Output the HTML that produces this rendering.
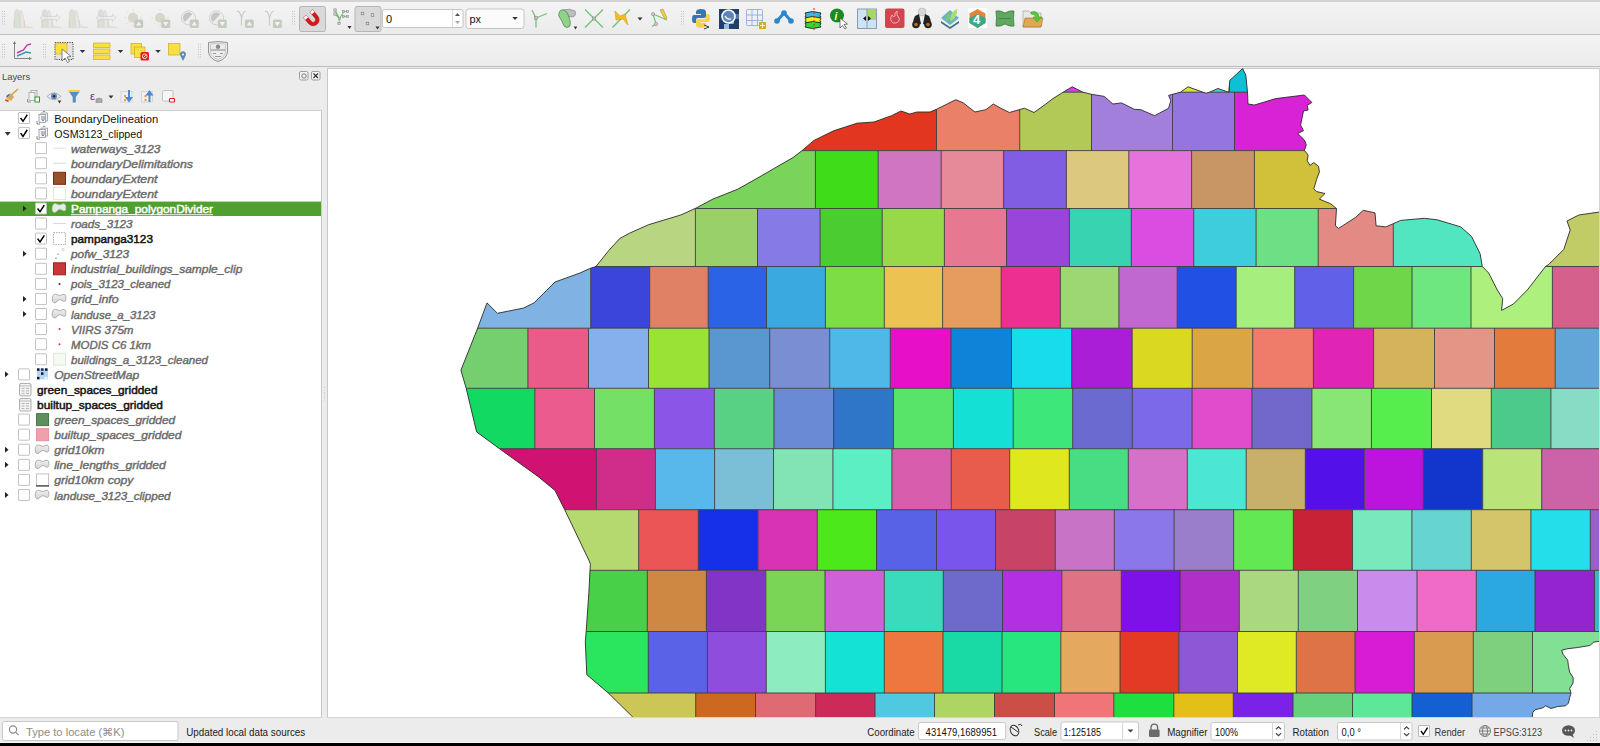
<!DOCTYPE html>
<html><head><meta charset="utf-8"><style>
*{box-sizing:border-box}
body{margin:0;width:1600px;height:746px;overflow:hidden;position:relative;background:#ececec;font-family:"Liberation Sans", sans-serif;}
.abs{position:absolute}
.tb{position:absolute;left:0;width:1600px;background:linear-gradient(#f4f4f4,#ebebeb);}
svg text{font-family:"Liberation Sans", sans-serif}
</style></head><body>
<div class="tb" style="top:0;height:35px;border-top:2px solid #d4d4d4;border-bottom:1px solid #c2c2c2"></div>
<div class="tb" style="top:35px;height:32px;border-bottom:1px solid #bdbdbd"></div>
<div class="abs" style="left:0;top:110px;width:322px;height:608px;background:#fff;border-top:1px solid #cfcfcf;border-right:1px solid #c8c8c8;border-bottom:1px solid #d4d4d4"></div>
<div class="abs" style="left:327px;top:68px;width:1273px;height:650px;background:#fff;border:1px solid #c8c8c8;border-right:1px solid #d4d4d4;border-bottom:1px solid #d4d4d4"></div>
<svg width="1271" height="649" viewBox="328 68 1271 649" style="position:absolute;left:328px;top:68px"><defs><clipPath id="cp"><polygon points="460.9,370.2 477.7,328 487,302.9 497.5,313.3 523.7,308 534,302.9 555,282 580,273 589.6,268.6 596,266.5 607.9,251.5 619.7,238.6 629.3,233.3 648.6,224.7 680.8,215 695.8,208.2 713,199 737.6,189.3 762.2,175.4 780,165 793,157.6 801.9,150.7 814,140.4 833.6,130.8 857,123.2 874,122 891.5,115.7 901,111 909.7,114 917,112 930,112 936.5,109.3 955.8,99.7 963.3,102.9 975,112 985.8,109.7 993.3,104 1000.8,108.2 1009.4,112.5 1024.4,108.2 1034,112.5 1045.9,104 1052.9,98.6 1062.5,92.6 1072.2,86.8 1082.9,92.2 1091.5,94.3 1104.3,96.4 1112.9,104 1121.5,102.9 1134.3,109.3 1140.8,109.7 1154.7,115.7 1168.6,108.2 1170.8,100.7 1168.6,95.4 1172.5,94.3 1180.4,92.2 1188,86.8 1203,92.2 1206.2,93.2 1209.4,92.2 1218,88.5 1228.7,92.2 1229.8,80.4 1242.6,68.6 1245.8,75 1247.5,92.2 1248,104 1254.4,105 1275.8,98.6 1304.4,95 1311.9,102.5 1307.2,105.3 1308.1,110 1303.5,111 1300.6,125 1303.5,130.7 1297.8,133.5 1304.4,140 1306.3,144.7 1304.4,150.4 1308.1,155 1307.2,160.7 1310,165.4 1313.8,162.5 1318.5,166.3 1319.4,172 1316.6,179.4 1313.8,188.8 1316.6,191.6 1325,193.5 1319.4,199.1 1330.7,203.8 1336.5,208.6 1335.4,225.8 1338.6,228.4 1355.8,217.2 1363.3,210.3 1375,212.9 1376.1,225.8 1385.8,226.9 1400.8,220.4 1424.4,218.3 1437.2,219.8 1460.8,226.9 1471.6,236.5 1480.1,253.7 1482.3,266.5 1488.7,273 1497.3,290 1502.7,298.6 1501.6,310.4 1513.4,304 1527.3,290 1545.5,266.5 1548.8,264.4 1563.8,249.4 1570.2,230 1567,221 1578.8,215 1610,210.5 1610,641.4 1599.2,641.4 1593.8,642.1 1589.8,645.5 1577.7,647.5 1567,648.8 1561.7,650.2 1563,654.2 1567.7,660.2 1568.4,665.6 1569.7,672.3 1573.1,677.6 1573.1,683 1569.7,688.4 1571,693.1 1569.7,697.7 1568.4,703.1 1565.7,705.8 1557.6,706.5 1551,708.5 1545.6,705.8 1542.9,707.8 1534.9,709.8 1532.8,712.5 1532.2,717.2 1532.2,725 640.5,725 632.9,717.2 608.2,692.9 586.8,674.7 585.3,641.5 586.2,631.4 588.9,592.2 590,570.3 590.4,564.4 589.3,561.1 564.7,509.7 555,490.4 537.9,476.4 499.3,448.6 476.6,431.9 466.2,388.3"/></clipPath></defs><g clip-path="url(#cp)"><rect x="400" y="55" width="690.0" height="37.2" fill="#dd3ddd"/><rect x="1090" y="55" width="80.0" height="37.2" fill="#ffffff"/><rect x="1170" y="55" width="36.0" height="37.2" fill="#d5e03a"/><rect x="1206" y="55" width="23.3" height="37.2" fill="#3cd8c6"/><rect x="1229.3" y="55" width="390.7" height="37.2" fill="#0cc0d6"/><rect x="400" y="92.2" width="536.5" height="58.4" fill="#e3361f"/><rect x="936.5" y="92.2" width="83.2" height="58.4" fill="#eb8068"/><rect x="1019.7" y="92.2" width="71.8" height="58.4" fill="#b3c957"/><rect x="1091.5" y="92.2" width="81.0" height="58.4" fill="#a37fdc"/><rect x="1172.5" y="92.2" width="62.0" height="58.4" fill="#9575e0"/><rect x="1234.5" y="92.2" width="385.5" height="58.4" fill="#d822d6"/><rect x="400" y="150.6" width="415.4" height="57.9" fill="#7ad35a"/><rect x="815.4" y="150.6" width="62.8" height="57.9" fill="#3fdd19"/><rect x="878.2" y="150.6" width="63.0" height="57.9" fill="#d075c0"/><rect x="941.2" y="150.6" width="62.4" height="57.9" fill="#e68a9a"/><rect x="1003.6" y="150.6" width="62.8" height="57.9" fill="#815de3"/><rect x="1066.4" y="150.6" width="62.4" height="57.9" fill="#dcc97d"/><rect x="1128.8" y="150.6" width="62.8" height="57.9" fill="#e673db"/><rect x="1191.6" y="150.6" width="62.8" height="57.9" fill="#c89565"/><rect x="1254.4" y="150.6" width="365.6" height="57.9" fill="#d0c03a"/><rect x="400" y="208.5" width="295.4" height="58.0" fill="#b8d682"/><rect x="695.4" y="208.5" width="62.1" height="58.0" fill="#9ad06a"/><rect x="757.5" y="208.5" width="62.6" height="58.0" fill="#857ae6"/><rect x="820.1" y="208.5" width="62.1" height="58.0" fill="#4bcc30"/><rect x="882.2" y="208.5" width="62.2" height="58.0" fill="#97d948"/><rect x="944.4" y="208.5" width="62.1" height="58.0" fill="#e77891"/><rect x="1006.5" y="208.5" width="62.9" height="58.0" fill="#9a45da"/><rect x="1069.4" y="208.5" width="61.9" height="58.0" fill="#38d4b2"/><rect x="1131.3" y="208.5" width="62.4" height="58.0" fill="#d94de0"/><rect x="1193.7" y="208.5" width="62.4" height="58.0" fill="#3dcddd"/><rect x="1256.1" y="208.5" width="62.1" height="58.0" fill="#6ddf85"/><rect x="1318.2" y="208.5" width="75.1" height="58.0" fill="#e38a85"/><rect x="1393.3" y="208.5" width="126.7" height="58.0" fill="#51e6c0"/><rect x="1520" y="208.5" width="100.0" height="58.0" fill="#c2cc66"/><rect x="400" y="266.5" width="190.7" height="61.7" fill="#80b3e3"/><rect x="590.7" y="266.5" width="59.0" height="61.7" fill="#3c45db"/><rect x="649.7" y="266.5" width="58.5" height="61.7" fill="#e08064"/><rect x="708.2" y="266.5" width="58.3" height="61.7" fill="#2a63e6"/><rect x="766.5" y="266.5" width="58.9" height="61.7" fill="#3aa9e0"/><rect x="825.4" y="266.5" width="58.9" height="61.7" fill="#7ddd45"/><rect x="884.3" y="266.5" width="58.3" height="61.7" fill="#ecc253"/><rect x="942.6" y="266.5" width="58.6" height="61.7" fill="#e69c5e"/><rect x="1001.2" y="266.5" width="59.2" height="61.7" fill="#ec2f91"/><rect x="1060.4" y="266.5" width="58.5" height="61.7" fill="#9dd771"/><rect x="1118.9" y="266.5" width="58.3" height="61.7" fill="#c068d0"/><rect x="1177.2" y="266.5" width="59.0" height="61.7" fill="#2050e4"/><rect x="1236.2" y="266.5" width="58.5" height="61.7" fill="#a6ee7e"/><rect x="1294.7" y="266.5" width="58.9" height="61.7" fill="#6060e8"/><rect x="1353.6" y="266.5" width="58.4" height="61.7" fill="#6fd64a"/><rect x="1412" y="266.5" width="59.0" height="61.7" fill="#6ee87e"/><rect x="1471" y="266.5" width="81.4" height="61.7" fill="#adf07e"/><rect x="1552.4" y="266.5" width="67.6" height="61.7" fill="#d5608c"/><rect x="400" y="328.2" width="127.9" height="60.1" fill="#76cf6e"/><rect x="527.9" y="328.2" width="60.6" height="60.1" fill="#eb5b8a"/><rect x="588.5" y="328.2" width="60.0" height="60.1" fill="#85b0ec"/><rect x="648.5" y="328.2" width="60.5" height="60.1" fill="#98e335"/><rect x="709.0" y="328.2" width="60.7" height="60.1" fill="#5a96d0"/><rect x="769.7" y="328.2" width="60.0" height="60.1" fill="#7a8ed3"/><rect x="829.7" y="328.2" width="60.6" height="60.1" fill="#4fb8e8"/><rect x="890.3" y="328.2" width="60.6" height="60.1" fill="#e80fc8"/><rect x="950.9" y="328.2" width="60.6" height="60.1" fill="#0f83d8"/><rect x="1011.5" y="328.2" width="60.2" height="60.1" fill="#18dcea"/><rect x="1071.7" y="328.2" width="60.5" height="60.1" fill="#ab1ed8"/><rect x="1132.2" y="328.2" width="60.0" height="60.1" fill="#dbd822"/><rect x="1192.2" y="328.2" width="60.5" height="60.1" fill="#daa545"/><rect x="1252.7" y="328.2" width="60.7" height="60.1" fill="#ef7b6a"/><rect x="1313.4" y="328.2" width="60.2" height="60.1" fill="#e024b4"/><rect x="1373.6" y="328.2" width="60.9" height="60.1" fill="#d4b35a"/><rect x="1434.5" y="328.2" width="60.0" height="60.1" fill="#e39586"/><rect x="1494.5" y="328.2" width="60.7" height="60.1" fill="#e37b3d"/><rect x="1555.2" y="328.2" width="64.8" height="60.1" fill="#62a6d8"/><rect x="400" y="388.3" width="134.8" height="60.4" fill="#12d962"/><rect x="534.8" y="388.3" width="59.7" height="60.4" fill="#ec5b8e"/><rect x="594.5" y="388.3" width="59.9" height="60.4" fill="#74e066"/><rect x="654.4" y="388.3" width="60.0" height="60.4" fill="#8b55e8"/><rect x="714.4" y="388.3" width="59.6" height="60.4" fill="#59d185"/><rect x="774.0" y="388.3" width="59.6" height="60.4" fill="#6a8ad5"/><rect x="833.6" y="388.3" width="59.8" height="60.4" fill="#3076c8"/><rect x="893.4" y="388.3" width="60.0" height="60.4" fill="#58e468"/><rect x="953.4" y="388.3" width="59.8" height="60.4" fill="#14e0d6"/><rect x="1013.2" y="388.3" width="59.5" height="60.4" fill="#3de87a"/><rect x="1072.7" y="388.3" width="59.6" height="60.4" fill="#6a6ad0"/><rect x="1132.3" y="388.3" width="59.8" height="60.4" fill="#7c69ea"/><rect x="1192.1" y="388.3" width="59.8" height="60.4" fill="#e04ccc"/><rect x="1251.9" y="388.3" width="60.0" height="60.4" fill="#7268cc"/><rect x="1311.9" y="388.3" width="59.5" height="60.4" fill="#88e675"/><rect x="1371.4" y="388.3" width="60.1" height="60.4" fill="#55ee4c"/><rect x="1431.5" y="388.3" width="59.8" height="60.4" fill="#e0da80"/><rect x="1491.3" y="388.3" width="59.6" height="60.4" fill="#4cca8c"/><rect x="1550.9" y="388.3" width="69.1" height="60.4" fill="#87dcc6"/><rect x="400" y="448.7" width="196.4" height="61.0" fill="#d01272"/><rect x="596.4" y="448.7" width="59.0" height="61.0" fill="#d02d8b"/><rect x="655.4" y="448.7" width="59.2" height="61.0" fill="#58b8ec"/><rect x="714.6" y="448.7" width="58.9" height="61.0" fill="#7abfd6"/><rect x="773.5" y="448.7" width="59.4" height="61.0" fill="#82e4b4"/><rect x="832.9" y="448.7" width="59.0" height="61.0" fill="#5cefc4"/><rect x="891.9" y="448.7" width="59.4" height="61.0" fill="#d85dac"/><rect x="951.3" y="448.7" width="58.4" height="61.0" fill="#e85c4c"/><rect x="1009.7" y="448.7" width="59.6" height="61.0" fill="#dfe81f"/><rect x="1069.3" y="448.7" width="59.0" height="61.0" fill="#47dd82"/><rect x="1128.3" y="448.7" width="59.0" height="61.0" fill="#d571c8"/><rect x="1187.3" y="448.7" width="58.9" height="61.0" fill="#4ce6d5"/><rect x="1246.2" y="448.7" width="59.1" height="61.0" fill="#c8b06a"/><rect x="1305.3" y="448.7" width="59.0" height="61.0" fill="#5310e8"/><rect x="1364.3" y="448.7" width="59.0" height="61.0" fill="#bd14dd"/><rect x="1423.3" y="448.7" width="59.4" height="61.0" fill="#1236cc"/><rect x="1482.7" y="448.7" width="59.0" height="61.0" fill="#bae379"/><rect x="1541.7" y="448.7" width="78.3" height="61.0" fill="#cc62a8"/><rect x="400" y="509.7" width="238.7" height="60.6" fill="#b5d96f"/><rect x="638.7" y="509.7" width="59.6" height="60.6" fill="#ec5555"/><rect x="698.3" y="509.7" width="59.6" height="60.6" fill="#1530e8"/><rect x="757.9" y="509.7" width="59.4" height="60.6" fill="#d833b4"/><rect x="817.3" y="509.7" width="59.2" height="60.6" fill="#4de81a"/><rect x="876.5" y="509.7" width="60.0" height="60.6" fill="#5862e6"/><rect x="936.5" y="509.7" width="59.0" height="60.6" fill="#7a55ec"/><rect x="995.5" y="509.7" width="59.8" height="60.6" fill="#c84466"/><rect x="1055.3" y="509.7" width="59.0" height="60.6" fill="#c873c6"/><rect x="1114.3" y="509.7" width="59.8" height="60.6" fill="#8b76ea"/><rect x="1174.1" y="509.7" width="59.5" height="60.6" fill="#9b7ecb"/><rect x="1233.6" y="509.7" width="59.7" height="60.6" fill="#62e852"/><rect x="1293.3" y="509.7" width="59.2" height="60.6" fill="#c82236"/><rect x="1352.5" y="509.7" width="59.4" height="60.6" fill="#7ae8bd"/><rect x="1411.9" y="509.7" width="59.4" height="60.6" fill="#66d4d0"/><rect x="1471.3" y="509.7" width="59.6" height="60.6" fill="#d5c56a"/><rect x="1530.9" y="509.7" width="59.4" height="60.6" fill="#24dfea"/><rect x="1590.3" y="509.7" width="29.7" height="60.6" fill="#9a5fcc"/><rect x="400" y="570.3" width="247.3" height="61.2" fill="#48d048"/><rect x="647.3" y="570.3" width="59.1" height="61.2" fill="#cf8843"/><rect x="706.4" y="570.3" width="59.4" height="61.2" fill="#8134c6"/><rect x="765.8" y="570.3" width="59.2" height="61.2" fill="#7ad556"/><rect x="825.0" y="570.3" width="59.3" height="61.2" fill="#d060da"/><rect x="884.3" y="570.3" width="59.0" height="61.2" fill="#3adbbd"/><rect x="943.3" y="570.3" width="59.2" height="61.2" fill="#6e6acc"/><rect x="1002.5" y="570.3" width="59.3" height="61.2" fill="#b22fe3"/><rect x="1061.8" y="570.3" width="59.5" height="61.2" fill="#df7385"/><rect x="1121.3" y="570.3" width="58.7" height="61.2" fill="#7e10e8"/><rect x="1180.0" y="570.3" width="59.3" height="61.2" fill="#b12ec8"/><rect x="1239.3" y="570.3" width="59.0" height="61.2" fill="#aad880"/><rect x="1298.3" y="570.3" width="59.2" height="61.2" fill="#7fd080"/><rect x="1357.5" y="570.3" width="59.5" height="61.2" fill="#c78cec"/><rect x="1417.0" y="570.3" width="59.3" height="61.2" fill="#f06ac8"/><rect x="1476.3" y="570.3" width="58.7" height="61.2" fill="#2ca8e0"/><rect x="1535.0" y="570.3" width="59.5" height="61.2" fill="#9424d0"/><rect x="1594.5" y="570.3" width="25.5" height="61.2" fill="#3bb8c8"/><rect x="400" y="631.5" width="248.3" height="61.5" fill="#2ae65e"/><rect x="648.3" y="631.5" width="59.2" height="61.5" fill="#5a62e6"/><rect x="707.5" y="631.5" width="58.8" height="61.5" fill="#8e4ddd"/><rect x="766.3" y="631.5" width="59.1" height="61.5" fill="#8eedc0"/><rect x="825.4" y="631.5" width="58.9" height="61.5" fill="#14e2d4"/><rect x="884.3" y="631.5" width="58.7" height="61.5" fill="#ed773f"/><rect x="943.0" y="631.5" width="59.0" height="61.5" fill="#19d9a4"/><rect x="1002.0" y="631.5" width="58.8" height="61.5" fill="#28e67e"/><rect x="1060.8" y="631.5" width="59.2" height="61.5" fill="#e4a85e"/><rect x="1120.0" y="631.5" width="58.8" height="61.5" fill="#e23a24"/><rect x="1178.8" y="631.5" width="58.7" height="61.5" fill="#8d57d6"/><rect x="1237.5" y="631.5" width="58.8" height="61.5" fill="#dfea25"/><rect x="1296.3" y="631.5" width="58.7" height="61.5" fill="#de7446"/><rect x="1355.0" y="631.5" width="59.3" height="61.5" fill="#d81cd6"/><rect x="1414.3" y="631.5" width="59.0" height="61.5" fill="#d89b4f"/><rect x="1473.3" y="631.5" width="59.2" height="61.5" fill="#7ecf7e"/><rect x="1532.5" y="631.5" width="87.5" height="61.5" fill="#82e094"/><rect x="400" y="693.0" width="295.7" height="37.0" fill="#cbc656"/><rect x="695.7" y="693.0" width="59.8" height="37.0" fill="#cc6820"/><rect x="755.5" y="693.0" width="60.1" height="37.0" fill="#e06a74"/><rect x="815.6" y="693.0" width="59.4" height="37.0" fill="#cc2a58"/><rect x="875.0" y="693.0" width="59.5" height="37.0" fill="#50c8e0"/><rect x="934.5" y="693.0" width="60.0" height="37.0" fill="#aed462"/><rect x="994.5" y="693.0" width="60.0" height="37.0" fill="#cc4e46"/><rect x="1054.5" y="693.0" width="59.3" height="37.0" fill="#f07478"/><rect x="1113.8" y="693.0" width="60.0" height="37.0" fill="#1de040"/><rect x="1173.8" y="693.0" width="59.5" height="37.0" fill="#e2c018"/><rect x="1233.3" y="693.0" width="59.7" height="37.0" fill="#7a22e8"/><rect x="1293.0" y="693.0" width="59.5" height="37.0" fill="#66d07a"/><rect x="1352.5" y="693.0" width="59.5" height="37.0" fill="#5ce898"/><rect x="1412.0" y="693.0" width="60.0" height="37.0" fill="#1460d2"/><rect x="1472.0" y="693.0" width="148.0" height="37.0" fill="#74a8e6"/><path d="M1090,55V92.2M1170,55V92.2M1206,55V92.2M1229.3,55V92.2M400,92.2H1620M936.5,92.2V150.6M1019.7,92.2V150.6M1091.5,92.2V150.6M1172.5,92.2V150.6M1234.5,92.2V150.6M400,150.6H1620M815.4,150.6V208.5M878.2,150.6V208.5M941.2,150.6V208.5M1003.6,150.6V208.5M1066.4,150.6V208.5M1128.8,150.6V208.5M1191.6,150.6V208.5M1254.4,150.6V208.5M400,208.5H1620M695.4,208.5V266.5M757.5,208.5V266.5M820.1,208.5V266.5M882.2,208.5V266.5M944.4,208.5V266.5M1006.5,208.5V266.5M1069.4,208.5V266.5M1131.3,208.5V266.5M1193.7,208.5V266.5M1256.1,208.5V266.5M1318.2,208.5V266.5M1393.3,208.5V266.5M1520,208.5V266.5M400,266.5H1620M590.7,266.5V328.2M649.7,266.5V328.2M708.2,266.5V328.2M766.5,266.5V328.2M825.4,266.5V328.2M884.3,266.5V328.2M942.6,266.5V328.2M1001.2,266.5V328.2M1060.4,266.5V328.2M1118.9,266.5V328.2M1177.2,266.5V328.2M1236.2,266.5V328.2M1294.7,266.5V328.2M1353.6,266.5V328.2M1412,266.5V328.2M1471,266.5V328.2M1552.4,266.5V328.2M400,328.2H1620M527.9,328.2V388.3M588.5,328.2V388.3M648.5,328.2V388.3M709.0,328.2V388.3M769.7,328.2V388.3M829.7,328.2V388.3M890.3,328.2V388.3M950.9,328.2V388.3M1011.5,328.2V388.3M1071.7,328.2V388.3M1132.2,328.2V388.3M1192.2,328.2V388.3M1252.7,328.2V388.3M1313.4,328.2V388.3M1373.6,328.2V388.3M1434.5,328.2V388.3M1494.5,328.2V388.3M1555.2,328.2V388.3M400,388.3H1620M534.8,388.3V448.7M594.5,388.3V448.7M654.4,388.3V448.7M714.4,388.3V448.7M774.0,388.3V448.7M833.6,388.3V448.7M893.4,388.3V448.7M953.4,388.3V448.7M1013.2,388.3V448.7M1072.7,388.3V448.7M1132.3,388.3V448.7M1192.1,388.3V448.7M1251.9,388.3V448.7M1311.9,388.3V448.7M1371.4,388.3V448.7M1431.5,388.3V448.7M1491.3,388.3V448.7M1550.9,388.3V448.7M400,448.7H1620M596.4,448.7V509.7M655.4,448.7V509.7M714.6,448.7V509.7M773.5,448.7V509.7M832.9,448.7V509.7M891.9,448.7V509.7M951.3,448.7V509.7M1009.7,448.7V509.7M1069.3,448.7V509.7M1128.3,448.7V509.7M1187.3,448.7V509.7M1246.2,448.7V509.7M1305.3,448.7V509.7M1364.3,448.7V509.7M1423.3,448.7V509.7M1482.7,448.7V509.7M1541.7,448.7V509.7M400,509.7H1620M638.7,509.7V570.3M698.3,509.7V570.3M757.9,509.7V570.3M817.3,509.7V570.3M876.5,509.7V570.3M936.5,509.7V570.3M995.5,509.7V570.3M1055.3,509.7V570.3M1114.3,509.7V570.3M1174.1,509.7V570.3M1233.6,509.7V570.3M1293.3,509.7V570.3M1352.5,509.7V570.3M1411.9,509.7V570.3M1471.3,509.7V570.3M1530.9,509.7V570.3M1590.3,509.7V570.3M400,570.3H1620M647.3,570.3V631.5M706.4,570.3V631.5M765.8,570.3V631.5M825.0,570.3V631.5M884.3,570.3V631.5M943.3,570.3V631.5M1002.5,570.3V631.5M1061.8,570.3V631.5M1121.3,570.3V631.5M1180.0,570.3V631.5M1239.3,570.3V631.5M1298.3,570.3V631.5M1357.5,570.3V631.5M1417.0,570.3V631.5M1476.3,570.3V631.5M1535.0,570.3V631.5M1594.5,570.3V631.5M400,631.5H1620M648.3,631.5V693.0M707.5,631.5V693.0M766.3,631.5V693.0M825.4,631.5V693.0M884.3,631.5V693.0M943.0,631.5V693.0M1002.0,631.5V693.0M1060.8,631.5V693.0M1120.0,631.5V693.0M1178.8,631.5V693.0M1237.5,631.5V693.0M1296.3,631.5V693.0M1355.0,631.5V693.0M1414.3,631.5V693.0M1473.3,631.5V693.0M1532.5,631.5V693.0M400,693.0H1620M695.7,693.0V730M755.5,693.0V730M815.6,693.0V730M875.0,693.0V730M934.5,693.0V730M994.5,693.0V730M1054.5,693.0V730M1113.8,693.0V730M1173.8,693.0V730M1233.3,693.0V730M1293.0,693.0V730M1352.5,693.0V730M1412.0,693.0V730M1472.0,693.0V730M400,730H1620" stroke="#3a3a3a" stroke-width="0.9" fill="none"/></g><polygon points="460.9,370.2 477.7,328 487,302.9 497.5,313.3 523.7,308 534,302.9 555,282 580,273 589.6,268.6 596,266.5 607.9,251.5 619.7,238.6 629.3,233.3 648.6,224.7 680.8,215 695.8,208.2 713,199 737.6,189.3 762.2,175.4 780,165 793,157.6 801.9,150.7 814,140.4 833.6,130.8 857,123.2 874,122 891.5,115.7 901,111 909.7,114 917,112 930,112 936.5,109.3 955.8,99.7 963.3,102.9 975,112 985.8,109.7 993.3,104 1000.8,108.2 1009.4,112.5 1024.4,108.2 1034,112.5 1045.9,104 1052.9,98.6 1062.5,92.6 1072.2,86.8 1082.9,92.2 1091.5,94.3 1104.3,96.4 1112.9,104 1121.5,102.9 1134.3,109.3 1140.8,109.7 1154.7,115.7 1168.6,108.2 1170.8,100.7 1168.6,95.4 1172.5,94.3 1180.4,92.2 1188,86.8 1203,92.2 1206.2,93.2 1209.4,92.2 1218,88.5 1228.7,92.2 1229.8,80.4 1242.6,68.6 1245.8,75 1247.5,92.2 1248,104 1254.4,105 1275.8,98.6 1304.4,95 1311.9,102.5 1307.2,105.3 1308.1,110 1303.5,111 1300.6,125 1303.5,130.7 1297.8,133.5 1304.4,140 1306.3,144.7 1304.4,150.4 1308.1,155 1307.2,160.7 1310,165.4 1313.8,162.5 1318.5,166.3 1319.4,172 1316.6,179.4 1313.8,188.8 1316.6,191.6 1325,193.5 1319.4,199.1 1330.7,203.8 1336.5,208.6 1335.4,225.8 1338.6,228.4 1355.8,217.2 1363.3,210.3 1375,212.9 1376.1,225.8 1385.8,226.9 1400.8,220.4 1424.4,218.3 1437.2,219.8 1460.8,226.9 1471.6,236.5 1480.1,253.7 1482.3,266.5 1488.7,273 1497.3,290 1502.7,298.6 1501.6,310.4 1513.4,304 1527.3,290 1545.5,266.5 1548.8,264.4 1563.8,249.4 1570.2,230 1567,221 1578.8,215 1610,210.5 1610,641.4 1599.2,641.4 1593.8,642.1 1589.8,645.5 1577.7,647.5 1567,648.8 1561.7,650.2 1563,654.2 1567.7,660.2 1568.4,665.6 1569.7,672.3 1573.1,677.6 1573.1,683 1569.7,688.4 1571,693.1 1569.7,697.7 1568.4,703.1 1565.7,705.8 1557.6,706.5 1551,708.5 1545.6,705.8 1542.9,707.8 1534.9,709.8 1532.8,712.5 1532.2,717.2 1532.2,725 640.5,725 632.9,717.2 608.2,692.9 586.8,674.7 585.3,641.5 586.2,631.4 588.9,592.2 590,570.3 590.4,564.4 589.3,561.1 564.7,509.7 555,490.4 537.9,476.4 499.3,448.6 476.6,431.9 466.2,388.3" fill="none" stroke="#2a2a2a" stroke-width="0.9" stroke-linejoin="round"/></svg>
<svg class="abs" style="left:0;top:0" width="1600" height="746" viewBox="0 0 1600 746">
<rect x="2" y="11" width="1" height="1" fill="#c4c4c4"/><rect x="4" y="11" width="1" height="1" fill="#c4c4c4"/><rect x="2" y="13.5" width="1" height="1" fill="#c4c4c4"/><rect x="4" y="13.5" width="1" height="1" fill="#c4c4c4"/><rect x="2" y="16.0" width="1" height="1" fill="#c4c4c4"/><rect x="4" y="16.0" width="1" height="1" fill="#c4c4c4"/><rect x="2" y="18.5" width="1" height="1" fill="#c4c4c4"/><rect x="4" y="18.5" width="1" height="1" fill="#c4c4c4"/><rect x="2" y="21.0" width="1" height="1" fill="#c4c4c4"/><rect x="4" y="21.0" width="1" height="1" fill="#c4c4c4"/><rect x="2" y="23.5" width="1" height="1" fill="#c4c4c4"/><rect x="4" y="23.5" width="1" height="1" fill="#c4c4c4"/><g transform="translate(13,9) scale(1.0)"><g transform="translate(0,0)"><path d="M1,18.6 L1.5,4 Q2.5,0 4,0.3 Q6,1 7,4.4 L7.5,18.6 Z" fill="#d9e1d5" stroke="#d0d4cc" stroke-width="0.6"/><path d="M7,4.4 Q7.5,1 8.1,1 Q9,1.5 10,6 Q11,14 12,16 Q14,18 19.8,18.6 L7.5,18.6 Z" fill="#e6e6e4" stroke="#d4d6d0" stroke-width="0.6"/><line x1="1.4" y1="11" x2="1.4" y2="18.6" stroke="#e2c4c4" stroke-width="0.7"/><line x1="11.4" y1="11" x2="11.4" y2="18.6" stroke="#e2c4c4" stroke-width="0.7"/></g></g><g transform="translate(40,9) scale(1.0)"><g transform="translate(0.8,0)"><path d="M1,18.6 L1.5,4 Q2.5,0 4,0.3 Q6,1 7,4.4 L7.5,18.6 Z" fill="#d9e1d5" stroke="#d0d4cc" stroke-width="0.6"/><path d="M7,4.4 Q7.5,1 8.1,1 Q9,1.5 10,6 Q11,14 12,16 Q14,18 19.8,18.6 L7.5,18.6 Z" fill="#e6e6e4" stroke="#d4d6d0" stroke-width="0.6"/><line x1="1.4" y1="11" x2="1.4" y2="18.6" stroke="#e2c4c4" stroke-width="0.7"/><line x1="11.4" y1="11" x2="11.4" y2="18.6" stroke="#e2c4c4" stroke-width="0.7"/></g><path d="M0.3,8.9 L4,5.5 L4,7.4 L16.4,7.4 L16.4,5.1 L20,8.9 L16.4,12.6 L16.4,10.4 L4,10.4 L4,12.3 Z" fill="#f0f0f0" fill-opacity="0.7" stroke="#cfcfcf" stroke-width="0.7"/></g><g transform="translate(68,9) scale(1.0)"><g transform="translate(0,0)"><path d="M1,18.6 L1.5,4 Q2.5,0 4,0.3 Q6,1 7,4.4 L7.5,18.6 Z" fill="#d9e1d5" stroke="#d0d4cc" stroke-width="0.6"/><path d="M7,4.4 Q7.5,1 8.1,1 Q9,1.5 10,6 Q11,14 12,16 Q14,18 19.8,18.6 L7.5,18.6 Z" fill="#e6e6e4" stroke="#d4d6d0" stroke-width="0.6"/><line x1="1.4" y1="11" x2="1.4" y2="18.6" stroke="#e2c4c4" stroke-width="0.7"/><line x1="11.4" y1="11" x2="11.4" y2="18.6" stroke="#e2c4c4" stroke-width="0.7"/></g></g><g transform="translate(96,9) scale(1.0)"><g transform="translate(0.8,0)"><path d="M1,18.6 L1.5,4 Q2.5,0 4,0.3 Q6,1 7,4.4 L7.5,18.6 Z" fill="#d9e1d5" stroke="#d0d4cc" stroke-width="0.6"/><path d="M7,4.4 Q7.5,1 8.1,1 Q9,1.5 10,6 Q11,14 12,16 Q14,18 19.8,18.6 L7.5,18.6 Z" fill="#e6e6e4" stroke="#d4d6d0" stroke-width="0.6"/><line x1="1.4" y1="11" x2="1.4" y2="18.6" stroke="#e2c4c4" stroke-width="0.7"/><line x1="11.4" y1="11" x2="11.4" y2="18.6" stroke="#e2c4c4" stroke-width="0.7"/></g><path d="M0.3,8.9 L4,5.5 L4,7.4 L16.4,7.4 L16.4,5.1 L20,8.9 L16.4,12.6 L16.4,10.4 L4,10.4 L4,12.3 Z" fill="#f0f0f0" fill-opacity="0.7" stroke="#cfcfcf" stroke-width="0.7"/></g><g transform="translate(124,9) scale(1.0)"><circle cx="9" cy="8.8" r="5" fill="#d8d6c8"/><line x1="15.8" y1="8.8" x2="17.8" y2="8.8" stroke="#dddbcf" stroke-width="0.9"/><line x1="13.8" y1="13.6" x2="15.2" y2="15.0" stroke="#dddbcf" stroke-width="0.9"/><line x1="9.0" y1="15.6" x2="9.0" y2="17.6" stroke="#dddbcf" stroke-width="0.9"/><line x1="4.2" y1="13.6" x2="2.8" y2="15.0" stroke="#dddbcf" stroke-width="0.9"/><line x1="2.2" y1="8.8" x2="0.2" y2="8.8" stroke="#dddbcf" stroke-width="0.9"/><line x1="4.2" y1="4.0" x2="2.8" y2="2.6" stroke="#dddbcf" stroke-width="0.9"/><line x1="9.0" y1="2.0" x2="9.0" y2="0.0" stroke="#dddbcf" stroke-width="0.9"/><line x1="13.8" y1="4.0" x2="15.2" y2="2.6" stroke="#dddbcf" stroke-width="0.9"/><rect x="10.2" y="10.5" width="9" height="8.5" rx="1.5" fill="#c4ccc2"/><polygon points="12.1,16.6 17.3,16.6 14.7,12.6" fill="#f4f4f4"/></g><g transform="translate(151,9) scale(1.0)"><circle cx="9" cy="8.8" r="5" fill="#d8d6c8"/><line x1="15.8" y1="8.8" x2="17.8" y2="8.8" stroke="#dddbcf" stroke-width="0.9"/><line x1="13.8" y1="13.6" x2="15.2" y2="15.0" stroke="#dddbcf" stroke-width="0.9"/><line x1="9.0" y1="15.6" x2="9.0" y2="17.6" stroke="#dddbcf" stroke-width="0.9"/><line x1="4.2" y1="13.6" x2="2.8" y2="15.0" stroke="#dddbcf" stroke-width="0.9"/><line x1="2.2" y1="8.8" x2="0.2" y2="8.8" stroke="#dddbcf" stroke-width="0.9"/><line x1="4.2" y1="4.0" x2="2.8" y2="2.6" stroke="#dddbcf" stroke-width="0.9"/><line x1="9.0" y1="2.0" x2="9.0" y2="0.0" stroke="#dddbcf" stroke-width="0.9"/><line x1="13.8" y1="4.0" x2="15.2" y2="2.6" stroke="#dddbcf" stroke-width="0.9"/><rect x="10.2" y="10.5" width="9" height="8.5" rx="1.5" fill="#c4ccc2"/><polygon points="12.1,13 17.3,13 14.7,17.2" fill="#f4f4f4"/></g><g transform="translate(180,9) scale(1.0)"><circle cx="8.5" cy="8.8" r="7" fill="none" stroke="#cfcfcf" stroke-width="1"/><path d="M3,8.8 A5.5,5.5 0 0 1 12.5,5 L5,13 A5.5,5.5 0 0 1 3,8.8 Z" fill="#c6c6c6"/><rect x="9.8" y="10.5" width="9" height="8.5" rx="1.5" fill="#c4ccc2"/><polygon points="11.700000000000001,16.6 16.900000000000002,16.6 14.3,12.6" fill="#f4f4f4"/></g><g transform="translate(208,9) scale(1.0)"><circle cx="8.5" cy="8.8" r="7" fill="none" stroke="#cfcfcf" stroke-width="1"/><path d="M3,8.8 A5.5,5.5 0 0 1 12.5,5 L5,13 A5.5,5.5 0 0 1 3,8.8 Z" fill="#c6c6c6"/><rect x="9.8" y="10.5" width="9" height="8.5" rx="1.5" fill="#c4ccc2"/><polygon points="11.700000000000001,13 16.900000000000002,13 14.3,17.2" fill="#f4f4f4"/></g><g transform="translate(236,9) scale(1.0)"><path d="M1,2.5 Q4,1.5 5.5,9 L5.5,16.5 M5.5,9 Q7,3 9.5,2" fill="none" stroke="#c9c9c9" stroke-width="1.1"/><rect x="8.9" y="10.5" width="9" height="8.5" rx="1.5" fill="#c4ccc2"/><polygon points="10.8,16.6 16.0,16.6 13.4,12.6" fill="#f4f4f4"/></g><g transform="translate(264,9) scale(1.0)"><path d="M1,2.5 Q4,1.5 5.5,9 L5.5,16.5 M5.5,9 Q7,3 9.5,2" fill="none" stroke="#c9c9c9" stroke-width="1.1"/><rect x="8.9" y="10.5" width="9" height="8.5" rx="1.5" fill="#c4ccc2"/><polygon points="10.8,13 16.0,13 13.4,17.2" fill="#f4f4f4"/></g><rect x="292" y="11" width="1" height="1" fill="#c4c4c4"/><rect x="294" y="11" width="1" height="1" fill="#c4c4c4"/><rect x="292" y="13.5" width="1" height="1" fill="#c4c4c4"/><rect x="294" y="13.5" width="1" height="1" fill="#c4c4c4"/><rect x="292" y="16.0" width="1" height="1" fill="#c4c4c4"/><rect x="294" y="16.0" width="1" height="1" fill="#c4c4c4"/><rect x="292" y="18.5" width="1" height="1" fill="#c4c4c4"/><rect x="294" y="18.5" width="1" height="1" fill="#c4c4c4"/><rect x="292" y="21.0" width="1" height="1" fill="#c4c4c4"/><rect x="294" y="21.0" width="1" height="1" fill="#c4c4c4"/><rect x="292" y="23.5" width="1" height="1" fill="#c4c4c4"/><rect x="294" y="23.5" width="1" height="1" fill="#c4c4c4"/><rect x="299.5" y="6.5" width="26" height="25" rx="2" fill="#d9d9d9" stroke="#b5b5b5" stroke-width="1"/><g transform="translate(312.5,19) rotate(-40)"><path d="M-6,-7 L-6,1 A6,6 0 0 0 6,1 L6,-7 L2.5,-7 L2.5,1 A2.5,2.5 0 0 1 -2.5,1 L-2.5,-7 Z" fill="#d81818" stroke="#a01010" stroke-width="0.5"/><rect x="-6" y="-7" width="3.5" height="3" fill="#fff"/><rect x="2.5" y="-7" width="3.5" height="3" fill="#fff"/></g><g stroke="#6fc46f" stroke-width="1.1" fill="none"><path d="M335,10 L339.5,18.5 L344,11.5 M339.5,18.5 L339,23.5 M335,14 L339.5,18.5 M344,11.5 L348,11.5 M343,16.5 L348,16.5"/></g><rect x="333.8" y="8.8" width="2.4" height="2.4" fill="#c8c8c8" stroke="#888" stroke-width="0.5"/><rect x="333.8" y="12.8" width="2.4" height="2.4" fill="#c8c8c8" stroke="#888" stroke-width="0.5"/><rect x="338.3" y="17.3" width="2.4" height="2.4" fill="#c8c8c8" stroke="#888" stroke-width="0.5"/><rect x="337.8" y="22.3" width="2.4" height="2.4" fill="#c8c8c8" stroke="#888" stroke-width="0.5"/><rect x="342.3" y="10.3" width="2.4" height="2.4" fill="#c8c8c8" stroke="#888" stroke-width="0.5"/><rect x="346.3" y="10.3" width="2.4" height="2.4" fill="#c8c8c8" stroke="#888" stroke-width="0.5"/><rect x="342.3" y="15.3" width="2.4" height="2.4" fill="#c8c8c8" stroke="#888" stroke-width="0.5"/><rect x="346.3" y="15.3" width="2.4" height="2.4" fill="#c8c8c8" stroke="#888" stroke-width="0.5"/><polygon points="347.5,26.0 351.5,26.0 349.5,29.0" fill="#333"/><rect x="355" y="6.5" width="26" height="25" rx="2" fill="#d9d9d9" stroke="#b5b5b5" stroke-width="1"/><rect x="361.2" y="12.2" width="2.6" height="2.6" fill="#ddd" stroke="#777" stroke-width="0.6"/><rect x="371.2" y="13.7" width="2.6" height="2.6" fill="#ddd" stroke="#777" stroke-width="0.6"/><rect x="366.2" y="22.2" width="2.6" height="2.6" fill="#ddd" stroke="#777" stroke-width="0.6"/><polygon points="375.5,26.5 379.5,26.5 377.5,29.5" fill="#333"/><rect x="382.5" y="9.5" width="80.5" height="18" rx="2" fill="#fff" stroke="#c4c4c4" stroke-width="1"/><line x1="452.5" y1="10" x2="452.5" y2="27" stroke="#dcdcdc"/><polygon points="455,16 460,16 457.5,13" fill="#555"/><polygon points="455,21 460,21 457.5,24" fill="#aaa"/><text x="386" y="23" font-size="11" font-weight="normal" font-style="normal" fill="#111">0</text><rect x="466" y="9" width="58" height="19.5" rx="2.5" fill="#fbfbfb" stroke="#c4c4c4" stroke-width="1"/><text x="469.5" y="23" font-size="11" font-weight="normal" font-style="normal" fill="#111" textLength="11.5" lengthAdjust="spacingAndGlyphs">px</text><polygon points="512.25,17.0 517.75,17.0 515,20.0" fill="#333"/><g stroke="#6fc46f" stroke-width="1.3" fill="none"><path d="M536,18 L532,10 M536,18 L547,13.5 M536,18 L536,27.5"/></g><rect x="534.5" y="16.5" width="3" height="3" fill="#bbb" stroke="#888" stroke-width="0.5"/><path d="M563,10 Q570,8 575,11 Q577,16 572,17 L567,16 Z" fill="#bdbdbd" stroke="#777" stroke-width="0.6"/><path d="M559,13 Q560,9 564,10 Q568,12 569,17 Q571,22 570,26 Q567,29 564,26 Q562,21 560,18 Q558,16 559,13 Z" fill="#8fd38a" stroke="#4b7a4b" stroke-width="0.7"/><polygon points="573.75,26.5 577.25,26.5 575.5,29.5" fill="#333"/><g stroke="#6fc46f" stroke-width="1.3"><line x1="585" y1="9.5" x2="603" y2="27.5"/><line x1="603" y1="9.5" x2="585" y2="27.5"/></g><rect x="592.5" y="17" width="3" height="3" fill="#bbb" stroke="#888" stroke-width="0.5"/><line x1="612.5" y1="27.5" x2="630" y2="9.5" stroke="#6fc46f" stroke-width="1.3"/><path d="M615,11 L620,16 L625,14 L628,25 L623,19 L616,20 Z" fill="#f0c020" stroke="#d09000" stroke-width="0.5"/><polygon points="637.5,17.5 642.5,17.5 640,20.5" fill="#333"/><g stroke="#6fc46f" stroke-width="1.2" fill="none"><path d="M652,26.5 L656,24 L653,14 L667,20"/></g><circle cx="653" cy="14" r="1.6" fill="#ccc" stroke="#777" stroke-width="0.5"/><circle cx="656" cy="24" r="1.6" fill="#ccc" stroke="#777" stroke-width="0.5"/><path d="M660,10 L663,9 L667,18 L665,19 Z" fill="#f0d040" stroke="#a08020" stroke-width="0.5"/><rect x="681" y="11" width="1" height="1" fill="#c4c4c4"/><rect x="683" y="11" width="1" height="1" fill="#c4c4c4"/><rect x="681" y="13.5" width="1" height="1" fill="#c4c4c4"/><rect x="683" y="13.5" width="1" height="1" fill="#c4c4c4"/><rect x="681" y="16.0" width="1" height="1" fill="#c4c4c4"/><rect x="683" y="16.0" width="1" height="1" fill="#c4c4c4"/><rect x="681" y="18.5" width="1" height="1" fill="#c4c4c4"/><rect x="683" y="18.5" width="1" height="1" fill="#c4c4c4"/><rect x="681" y="21.0" width="1" height="1" fill="#c4c4c4"/><rect x="683" y="21.0" width="1" height="1" fill="#c4c4c4"/><rect x="681" y="23.5" width="1" height="1" fill="#c4c4c4"/><rect x="683" y="23.5" width="1" height="1" fill="#c4c4c4"/><path d="M701,9 Q696,9 696,12 L696,14 L701,14 L701,15 L694,15 Q692,15 692,19 Q692,23 694,23 L696,23 L696,20 Q696,18 698,18 L704,18 Q706,18 706,16 L706,12 Q706,9 701,9 Z" fill="#3a74b8"/><path d="M701,28 Q706,28 706,25 L706,23 L701,23 L701,22 L708,22 Q710,22 710,18 Q710,14 708,14 L706,14 L706,17 Q706,19 704,19 L698,19 Q696,19 696,21 L696,25 Q696,28 701,28 Z" fill="#f7d34a"/><path d="M704,25 L709,27 L704,29" fill="none" stroke="#222" stroke-width="0.9"/><rect x="719" y="9" width="20" height="20" fill="#1f3f6a"/><rect x="724" y="14" width="5" height="5" fill="#7ea4cc"/><rect x="729" y="19" width="5" height="5" fill="#7ea4cc"/><rect x="724" y="24" width="5" height="5" fill="#9ebbdd"/><rect x="734" y="14" width="5" height="5" fill="#4e74a4"/><circle cx="728.5" cy="16.5" r="6.5" fill="#5f86b8" stroke="#fff" stroke-width="1.6"/><path d="M725,16 Q727,20 731,19" fill="none" stroke="#fff" stroke-width="1.2"/><g stroke="#9ab4dc" stroke-width="1" fill="none"><rect x="746.5" y="9.5" width="16" height="16" rx="1"/><line x1="752" y1="9.5" x2="752" y2="25.5"/><line x1="757.5" y1="9.5" x2="757.5" y2="25.5"/><line x1="746.5" y1="15" x2="762.5" y2="15"/><line x1="746.5" y1="20.5" x2="762.5" y2="20.5"/></g><rect x="759" y="22" width="7" height="7" fill="#d4aa30"/><path d="M762.5,23 L762.5,28 M760,25.5 L765,25.5" stroke="#fff" stroke-width="0.8"/><path d="M777,21 L784,13 L791,21" fill="none" stroke="#2a88cc" stroke-width="3"/><circle cx="777" cy="21" r="2.8" fill="#2a88cc"/><circle cx="784" cy="13" r="2.8" fill="#2a88cc"/><circle cx="791" cy="21" r="2.8" fill="#2a88cc"/><path d="M805,13 Q812,10 821,13 Q819,16 821,17 Q812,20 805,17 Q807,15 805,13 Z" fill="#38b8e8" stroke="#111" stroke-width="0.8"/><path d="M805,18 Q812,15 821,18 Q819,21 821,22 Q812,25 805,22 Q807,20 805,18 Z" fill="#f0f020" stroke="#111" stroke-width="0.8"/><path d="M805,23 Q812,20 821,23 Q819,26 821,27 Q812,30 805,27 Q807,25 805,23 Z" fill="#30d830" stroke="#111" stroke-width="0.8"/><line x1="814" y1="8" x2="814" y2="30" stroke="#e02020" stroke-width="1" stroke-dasharray="2,2"/><circle cx="837" cy="15.5" r="7" fill="#1d8a1d"/><text x="834.5" y="20" font-size="10" font-weight="bold" font-style="italic" fill="#fff">i</text><path d="M840,18 L840,28 L842.5,25.5 L845,29 L846.5,28 L844,24.5 L847.5,24 Z" fill="#fff" stroke="#444" stroke-width="0.7"/><rect x="857.5" y="9" width="19" height="19.5" fill="#cde4f6" stroke="#8a9ab0" stroke-width="1"/><rect x="867" y="10" width="9" height="10" fill="#a8d860"/><line x1="867" y1="9" x2="867" y2="28.5" stroke="#8a9ab0"/><polygon points="863,18.5 866,16 866,21" fill="#111"/><polygon points="871,18.5 868,16 868,21" fill="#111"/><rect x="885" y="8.5" width="19.5" height="19.5" rx="2" fill="#d2444e"/><path d="M893,23 Q889,20 892,15 Q893,18 895,16 Q894,13 897,11 Q896,15 899,18 Q900,22 896,23 Z" fill="none" stroke="#f2c0c0" stroke-width="0.9"/><circle cx="922" cy="12" r="4" fill="#d8d8d8" stroke="#aaa" stroke-width="0.5"/><path d="M914,26 Q912,22 915,16 L919,14 L921,24 Z" fill="#222"/><path d="M930,26 Q932,22 929,16 L925,14 L923,24 Z" fill="#222"/><circle cx="916" cy="24.5" r="3.8" fill="#222"/><circle cx="928" cy="24.5" r="3.8" fill="#222"/><circle cx="916" cy="24.5" r="1.8" fill="#c66a1a"/><circle cx="928" cy="24.5" r="1.8" fill="#c66a1a"/><path d="M941,21 L950,27 L959,21 L959,23 L950,29 L941,23 Z" fill="#3a6e80"/><path d="M941,18 L950,10 L959,18 L950,25 Z" fill="#6ab0c8"/><path d="M946,20 Q946,14 950,13 Q951,18 948,21 Z" fill="#80c860"/><path d="M950,20 Q951,11 957,9 Q958,17 951,21 Z" fill="#a8e070"/><rect x="968" y="8" width="19" height="20" fill="#fff"/><polygon points="977.5,9 985.5,13.5 985.5,23 977.5,28 969.5,23 969.5,13.5" fill="#e8843a"/><polygon points="969.5,18 977.5,14 985.5,18 985.5,23 977.5,28 969.5,23" fill="#3aa88a"/><text x="973" y="24" font-size="13" font-weight="bold" fill="#fff">4</text><path d="M996,11 Q1000,10 1005,13 Q1010,10 1014,11 Q1013,18 1014,26 Q1010,27 1005,24 Q1000,27 996,26 Q997,18 996,11 Z" fill="#5fa85f" stroke="#3a6a3a" stroke-width="0.7"/><line x1="999" y1="18.5" x2="1011" y2="18.5" stroke="#3a6a3a" stroke-width="0.6"/><path d="M1023,11 L1029,11 L1031,13 L1041,13 L1041,27 L1023,27 Z" fill="#e8e8e8" stroke="#999" stroke-width="0.6"/><path d="M1023,27 L1025,18 L1043,18 L1041,27 Z" fill="#e0a850" stroke="#a0702a" stroke-width="0.6"/><path d="M1031,12 Q1038,10 1039,17 L1042,17 L1037,22 L1033,17 L1036,17 Q1035,14 1031,14 Z" fill="#58c838" stroke="#3a9020" stroke-width="0.5"/><rect x="2" y="44" width="1" height="1" fill="#c4c4c4"/><rect x="4" y="44" width="1" height="1" fill="#c4c4c4"/><rect x="2" y="46.5" width="1" height="1" fill="#c4c4c4"/><rect x="4" y="46.5" width="1" height="1" fill="#c4c4c4"/><rect x="2" y="49.0" width="1" height="1" fill="#c4c4c4"/><rect x="4" y="49.0" width="1" height="1" fill="#c4c4c4"/><rect x="2" y="51.5" width="1" height="1" fill="#c4c4c4"/><rect x="4" y="51.5" width="1" height="1" fill="#c4c4c4"/><rect x="2" y="54.0" width="1" height="1" fill="#c4c4c4"/><rect x="4" y="54.0" width="1" height="1" fill="#c4c4c4"/><rect x="2" y="56.5" width="1" height="1" fill="#c4c4c4"/><rect x="4" y="56.5" width="1" height="1" fill="#c4c4c4"/><g fill="none" stroke="#777" stroke-width="0.9"><path d="M14.5,42 L14.5,58.5 L31,58.5"/></g><polygon points="13,44 14.5,41 16,44" fill="#777"/><polygon points="29,57 32,58.5 29,60" fill="#777"/><path d="M17,53 L20,51.5 L23.5,50 L27,45 L31,44" fill="none" stroke="#c23aa8" stroke-width="1.4"/><path d="M17,56 L22,54 L26,52 L31,53" fill="none" stroke="#3a9ab0" stroke-width="1.4"/><rect x="43" y="44" width="1" height="1" fill="#c4c4c4"/><rect x="45" y="44" width="1" height="1" fill="#c4c4c4"/><rect x="43" y="46.5" width="1" height="1" fill="#c4c4c4"/><rect x="45" y="46.5" width="1" height="1" fill="#c4c4c4"/><rect x="43" y="49.0" width="1" height="1" fill="#c4c4c4"/><rect x="45" y="49.0" width="1" height="1" fill="#c4c4c4"/><rect x="43" y="51.5" width="1" height="1" fill="#c4c4c4"/><rect x="45" y="51.5" width="1" height="1" fill="#c4c4c4"/><rect x="43" y="54.0" width="1" height="1" fill="#c4c4c4"/><rect x="45" y="54.0" width="1" height="1" fill="#c4c4c4"/><rect x="43" y="56.5" width="1" height="1" fill="#c4c4c4"/><rect x="45" y="56.5" width="1" height="1" fill="#c4c4c4"/><rect x="55" y="42.5" width="18" height="17" fill="#e4e4e4" stroke="#333" stroke-width="0.9" stroke-dasharray="1.2,1.2"/><rect x="55.5" y="43" width="11.5" height="11" fill="#f8e040" stroke="#c0a020" stroke-width="0.6"/><path d="M62,49 L62,61 L65,58 L67.5,62.5 L69.5,61.5 L67,57 L71,56.5 Z" fill="#fff" stroke="#555" stroke-width="0.7"/><polygon points="79.75,50.0 85.25,50.0 82.5,53.0" fill="#333"/><rect x="93.5" y="43" width="16.5" height="4.5" fill="#f8e040" stroke="#c0a020" stroke-width="0.6"/><rect x="93.5" y="49" width="16.5" height="4.5" fill="#f8e040" stroke="#c0a020" stroke-width="0.6"/><rect x="93.5" y="55" width="16.5" height="4.5" fill="#f8e040" stroke="#c0a020" stroke-width="0.6"/><polygon points="117.75,50.0 123.25,50.0 120.5,53.0" fill="#333"/><rect x="131" y="43.5" width="10.5" height="10.5" fill="#f8e040" stroke="#c0a020" stroke-width="0.6"/><rect x="134.5" y="47" width="10.5" height="10.5" fill="#f8e040" stroke="#c0a020" stroke-width="0.6"/><rect x="140.5" y="52" width="8.5" height="8.5" rx="1.5" fill="#e02020"/><circle cx="144.75" cy="56.25" r="2.3" fill="none" stroke="#fff" stroke-width="0.8"/><line x1="143.2" y1="57.8" x2="146.3" y2="54.7" stroke="#fff" stroke-width="0.8"/><polygon points="155.25,50.0 160.75,50.0 158,53.0" fill="#333"/><rect x="168.5" y="43.5" width="11.5" height="11.5" fill="#f8e040" stroke="#c0a020" stroke-width="0.6"/><path d="M183,61 L180.5,56 A3,3 0 1 1 185.5,56 Z" fill="#5a8ab0"/><circle cx="183" cy="54.5" r="1" fill="#fff"/><rect x="198" y="44" width="1" height="1" fill="#c4c4c4"/><rect x="200" y="44" width="1" height="1" fill="#c4c4c4"/><rect x="198" y="46.5" width="1" height="1" fill="#c4c4c4"/><rect x="200" y="46.5" width="1" height="1" fill="#c4c4c4"/><rect x="198" y="49.0" width="1" height="1" fill="#c4c4c4"/><rect x="200" y="49.0" width="1" height="1" fill="#c4c4c4"/><rect x="198" y="51.5" width="1" height="1" fill="#c4c4c4"/><rect x="200" y="51.5" width="1" height="1" fill="#c4c4c4"/><rect x="198" y="54.0" width="1" height="1" fill="#c4c4c4"/><rect x="200" y="54.0" width="1" height="1" fill="#c4c4c4"/><rect x="198" y="56.5" width="1" height="1" fill="#c4c4c4"/><rect x="200" y="56.5" width="1" height="1" fill="#c4c4c4"/><path d="M208.5,42.5 Q218,40.5 227.5,42.5 L227.5,52 Q226.5,59 218,61.5 Q209.5,59 208.5,52 Z" fill="#ececec" stroke="#8a8a8a" stroke-width="0.9"/><path d="M210.5,44 Q218,42.5 225.5,44 L225.5,52 Q224.5,57.5 218,59.5 Q211.5,57.5 210.5,52 Z" fill="none" stroke="#b0b0b0" stroke-width="0.6"/><circle cx="218" cy="46.8" r="2.2" fill="#8a8a8a"/><path d="M211,50 L225,50" stroke="#999" stroke-width="1.2"/><path d="M213,53.5 L216,53.5 M220,53.5 L223,53.5 M215,56.5 L221,56.5" stroke="#9a9a9a" stroke-width="1"/>
<rect x="324" y="387" width="1" height="1" fill="#bdbdbd"/><rect x="324" y="392.3" width="1" height="1" fill="#bdbdbd"/><rect x="324" y="397.3" width="1" height="1" fill="#bdbdbd"/><rect x="324" y="389.8" width="1" height="1" fill="#d4d4d4"/><rect x="324" y="394.8" width="1" height="1" fill="#d4d4d4"/><rect x="324" y="399.8" width="1" height="1" fill="#d4d4d4"/><text x="1.9" y="79.9" font-size="9.8" font-weight="normal" font-style="normal" fill="#4a4a4a" textLength="28.3" lengthAdjust="spacingAndGlyphs">Layers</text><rect x="299.5" y="71.5" width="8.5" height="8.5" rx="1.5" fill="#f4f4f4" stroke="#8a8a8a" stroke-width="0.8"/><circle cx="304" cy="76" r="2.2" fill="none" stroke="#666" stroke-width="0.9"/><rect x="311.5" y="71.5" width="8.5" height="8.5" rx="1.5" fill="#f4f4f4" stroke="#8a8a8a" stroke-width="0.8"/><path d="M313.5,73.5 L318,78 M318,73.5 L313.5,78" stroke="#333" stroke-width="1.2"/><path d="M6,98 L10,93 L13,96 L9,101 Z" fill="#e8c030"/><path d="M5.5,99 L9,101 L8,102 L5,100.5 Z" fill="#e03030"/><path d="M6,96 L9,94 L10,95 L7,97.5 Z" fill="#3070d0"/><path d="M10,96 L18,89" stroke="#d8a040" stroke-width="1.6"/><path d="M8,97 L12,94 L14,97 L11,101 Z" fill="#d0a870"/><g fill="#f2f2f2" stroke="#999" stroke-width="0.7"><rect x="31" y="90.5" width="6" height="8"/><rect x="29" y="92.5" width="6" height="8"/></g><path d="M27.5,102 L27.5,99 M27.5,102 L31,102" stroke="#777" stroke-width="0.7"/><rect x="35" y="97" width="4.5" height="5" fill="#fff" stroke="#2a9a2a" stroke-width="1"/><path d="M47,96.5 Q54,89 61,96.5 Q54,103 47,96.5 Z" fill="#e8e8e8" stroke="#999" stroke-width="0.7"/><circle cx="54" cy="96.2" r="3" fill="#5a88c8"/><circle cx="54" cy="96.2" r="1.2" fill="#234"/><polygon points="57.75,100.5 61.25,100.5 59.5,103.5" fill="#333"/><polygon points="68.5,91 80,91 75.8,97 75.8,102.5 72.7,102.5 72.7,97" fill="#5a8ac8"/><rect x="68.5" y="90" width="11.5" height="2" fill="#f0d040"/><text x="90" y="100" font-size="11" fill="#6a2a8a">ε</text><path d="M96,103 L96,99 Q99,97 102,99 L102,103" fill="#aaa" stroke="#888" stroke-width="0.6"/><polygon points="108.5,95.5 113.5,95.5 111,98.5" fill="#333"/><rect x="121" y="91.5" width="11" height="10.5" fill="#f0f0f0" stroke="#ccc" stroke-width="0.7"/><rect x="124" y="95" width="2" height="2" fill="#f0a030"/><rect x="124" y="99" width="2" height="2" fill="#f0a030"/><path d="M128,90 L130,90 L130,97 L133,97 L129,102.5 L125,97 L128,97 Z" fill="#4a88d0"/><rect x="141.5" y="91.5" width="11" height="10.5" fill="#f0f0f0" stroke="#ccc" stroke-width="0.7"/><rect x="144.5" y="95" width="2" height="2" fill="#f0a030"/><rect x="144.5" y="99" width="2" height="2" fill="#f0a030"/><path d="M148.5,102 L150.5,102 L150.5,95.5 L153.5,95.5 L149.5,90 L145.5,95.5 L148.5,95.5 Z" fill="#4a88d0"/><rect x="162.5" y="90.5" width="10.5" height="10.5" rx="1" fill="#f6f6f6" stroke="#bbb" stroke-width="0.9"/><rect x="169.5" y="98.5" width="5" height="3.5" rx="0.8" fill="#fff" stroke="#e02020" stroke-width="1.1"/>
<defs><linearGradient id="pg" x1="0" y1="0" x2="0" y2="1"><stop offset="0" stop-color="#f0f0f0"/><stop offset="1" stop-color="#d2d2d2"/></linearGradient></defs><rect x="18.5" y="112.5" width="11" height="11" fill="#fff" stroke="#c2c2c2" stroke-width="1" rx="0.5"/><path d="M20.6,118.0 L23,121.3 L27.3,114.7" fill="none" stroke="#000" stroke-width="1.5"/><g fill="#f4f4f4" stroke="#888" stroke-width="0.7"><rect x="41" y="113.0" width="6.5" height="8"/><rect x="39" y="114.5" width="6.5" height="8"/></g><path d="M37,124.0 L37,121.0 M37,124.0 L40,124.0" stroke="#555" stroke-width="0.7" fill="none"/><path d="M42,116.0 L42,120.0 Q43,121.5 44,120.0 L44,116.0" stroke="#4a6aa0" stroke-width="0.8" fill="none"/><polygon points="42.5,112.0 44,110.5 45.5,112.0" fill="#6a8ac0"/><text x="54.2" y="122.5" font-size="11" font-weight="normal" font-style="normal" fill="#111" textLength="104" lengthAdjust="spacingAndGlyphs">BoundaryDelineation</text><polygon points="4.7,132.08 10.7,132.08 7.7,135.68000000000004" fill="#333"/><rect x="18.5" y="127.58000000000001" width="11" height="11" fill="#fff" stroke="#c2c2c2" stroke-width="1" rx="0.5"/><path d="M20.6,133.08 L23,136.38000000000002 L27.3,129.78" fill="none" stroke="#000" stroke-width="1.5"/><g fill="#f4f4f4" stroke="#888" stroke-width="0.7"><rect x="41" y="128.08" width="6.5" height="8"/><rect x="39" y="129.58" width="6.5" height="8"/></g><path d="M37,139.08 L37,136.08 M37,139.08 L40,139.08" stroke="#555" stroke-width="0.7" fill="none"/><path d="M42,131.08 L42,135.08 Q43,136.58 44,135.08 L44,131.08" stroke="#4a6aa0" stroke-width="0.8" fill="none"/><polygon points="42.5,127.08000000000001 44,125.58000000000001 45.5,127.08000000000001" fill="#6a8ac0"/><text x="54.2" y="137.58" font-size="11" font-weight="normal" font-style="normal" fill="#111" textLength="88" lengthAdjust="spacingAndGlyphs">OSM3123_clipped</text><rect x="35.5" y="142.66" width="11" height="11" fill="#fff" stroke="#c2c2c2" stroke-width="1" rx="0.5"/><line x1="53" y1="148.16" x2="66" y2="148.16" stroke="#d8e0f4" stroke-width="1"/><text x="71" y="152.66" font-size="11" font-weight="normal" font-style="italic" fill="#6a6a6a" textLength="89.5" lengthAdjust="spacingAndGlyphs" stroke="#6a6a6a" stroke-width="0.4">waterways_3123</text><rect x="35.5" y="157.74" width="11" height="11" fill="#fff" stroke="#c2c2c2" stroke-width="1" rx="0.5"/><line x1="53" y1="163.24" x2="66" y2="163.24" stroke="#cfe3c8" stroke-width="1"/><text x="71" y="167.74" font-size="11" font-weight="normal" font-style="italic" fill="#6a6a6a" textLength="122" lengthAdjust="spacingAndGlyphs" stroke="#6a6a6a" stroke-width="0.4">boundaryDelimitations</text><rect x="35.5" y="172.82" width="11" height="11" fill="#fff" stroke="#c2c2c2" stroke-width="1" rx="0.5"/><rect x="53.5" y="172.32" width="12" height="12" fill="#96522a" stroke="#7a2a10" stroke-width="1"/><text x="71" y="182.82" font-size="11" font-weight="normal" font-style="italic" fill="#6a6a6a" textLength="86.5" lengthAdjust="spacingAndGlyphs" stroke="#6a6a6a" stroke-width="0.4">boundaryExtent</text><rect x="35.5" y="187.9" width="11" height="11" fill="#fff" stroke="#c2c2c2" stroke-width="1" rx="0.5"/><rect x="53.5" y="187.4" width="12" height="12" fill="#ffffff" stroke="#e4ecc8" stroke-width="1"/><text x="71" y="197.9" font-size="11" font-weight="normal" font-style="italic" fill="#6a6a6a" textLength="86.5" lengthAdjust="spacingAndGlyphs" stroke="#6a6a6a" stroke-width="0.4">boundaryExtent</text><rect x="0" y="201.58" width="321" height="14.4" fill="#4fa02f"/><polygon points="23,205.48000000000002 26.5,208.48000000000002 23,211.48000000000002" fill="#222"/><rect x="35.5" y="202.98000000000002" width="11" height="11" fill="#fff" stroke="#c2c2c2" stroke-width="1" rx="0.5"/><path d="M37.6,208.48000000000002 L40,211.78000000000003 L44.3,205.18" fill="none" stroke="#000" stroke-width="1.5"/><path transform="translate(52.1,203.48000000000002)" d="M0.8,2 C1.5,0 3,0.2 4,0.4 C5.5,0.8 6.5,1.6 7.6,1.6 C9,1.6 10.5,0 12,0.4 C13.8,1 13.8,3 13.7,3.5 C13.6,5 13.8,6.5 13,7 C12,7.6 11,7.2 10,6.5 C9,5.8 8,5.6 7.2,5.8 C5.5,6.2 4,9 2.4,8.9 C0.5,8.8 0,6.5 0.2,5 C0.3,3.5 0.5,2.5 0.8,2 Z" fill="#e6ebe6" stroke="#c0ccc0" stroke-width="0.8"/><text x="71" y="212.98000000000002" font-size="11" font-weight="normal" font-style="normal" fill="#fff" textLength="142" lengthAdjust="spacingAndGlyphs" stroke="#fff" stroke-width="0.45">Pampanga_polygonDivider</text><rect x="71" y="214.28000000000003" width="142" height="0.9" fill="#fff"/><rect x="35.5" y="218.06" width="11" height="11" fill="#fff" stroke="#c2c2c2" stroke-width="1" rx="0.5"/><line x1="53" y1="223.56" x2="66" y2="223.56" stroke="#d8d8d8" stroke-width="1"/><text x="71" y="228.06" font-size="11" font-weight="normal" font-style="italic" fill="#6a6a6a" textLength="61.6" lengthAdjust="spacingAndGlyphs" stroke="#6a6a6a" stroke-width="0.4">roads_3123</text><rect x="35.5" y="233.14" width="11" height="11" fill="#fff" stroke="#c2c2c2" stroke-width="1" rx="0.5"/><path d="M37.6,238.64 L40,241.94 L44.3,235.33999999999997" fill="none" stroke="#000" stroke-width="1.5"/><rect x="53.5" y="232.64" width="12" height="12" fill="#fff" stroke="#999" stroke-width="0.8" stroke-dasharray="1.5,1"/><text x="71" y="243.14" font-size="11" font-weight="normal" font-style="normal" fill="#111" textLength="82" lengthAdjust="spacingAndGlyphs" stroke="#111" stroke-width="0.45">pampanga3123</text><polygon points="23,250.72 26.5,253.72 23,256.72" fill="#222"/><rect x="35.5" y="248.22" width="11" height="11" fill="#fff" stroke="#c2c2c2" stroke-width="1" rx="0.5"/><circle cx="56" cy="258.22" r="0.9" fill="#aaa"/><circle cx="58" cy="254.22" r="0.9" fill="#bbb"/><circle cx="63" cy="249.72" r="1.2" fill="none" stroke="#bbb" stroke-width="0.6"/><text x="71" y="258.22" font-size="11" font-weight="normal" font-style="italic" fill="#6a6a6a" textLength="58" lengthAdjust="spacingAndGlyphs" stroke="#6a6a6a" stroke-width="0.4">pofw_3123</text><rect x="35.5" y="263.3" width="11" height="11" fill="#fff" stroke="#c2c2c2" stroke-width="1" rx="0.5"/><rect x="53.5" y="262.8" width="12" height="12" fill="#c8383a" stroke="#a02020" stroke-width="1"/><text x="71" y="273.3" font-size="11" font-weight="normal" font-style="italic" fill="#6a6a6a" textLength="171.3" lengthAdjust="spacingAndGlyphs" stroke="#6a6a6a" stroke-width="0.4">industrial_buildings_sample_clip</text><rect x="35.5" y="278.38" width="11" height="11" fill="#fff" stroke="#c2c2c2" stroke-width="1" rx="0.5"/><circle cx="59.5" cy="283.88" r="1" fill="#6a1010"/><text x="71" y="288.38" font-size="11" font-weight="normal" font-style="italic" fill="#6a6a6a" textLength="99.5" lengthAdjust="spacingAndGlyphs" stroke="#6a6a6a" stroke-width="0.4">pois_3123_cleaned</text><polygon points="23,295.96000000000004 26.5,298.96000000000004 23,301.96000000000004" fill="#222"/><rect x="35.5" y="293.46000000000004" width="11" height="11" fill="#fff" stroke="#c2c2c2" stroke-width="1" rx="0.5"/><path transform="translate(52.1,293.96000000000004)" d="M0.8,2 C1.5,0 3,0.2 4,0.4 C5.5,0.8 6.5,1.6 7.6,1.6 C9,1.6 10.5,0 12,0.4 C13.8,1 13.8,3 13.7,3.5 C13.6,5 13.8,6.5 13,7 C12,7.6 11,7.2 10,6.5 C9,5.8 8,5.6 7.2,5.8 C5.5,6.2 4,9 2.4,8.9 C0.5,8.8 0,6.5 0.2,5 C0.3,3.5 0.5,2.5 0.8,2 Z" fill="url(#pg)" stroke="#9a9a9a" stroke-width="0.8"/><text x="71" y="303.46000000000004" font-size="11" font-weight="normal" font-style="italic" fill="#6a6a6a" textLength="47.7" lengthAdjust="spacingAndGlyphs" stroke="#6a6a6a" stroke-width="0.4">grid_info</text><polygon points="23,311.03999999999996 26.5,314.03999999999996 23,317.03999999999996" fill="#222"/><rect x="35.5" y="308.53999999999996" width="11" height="11" fill="#fff" stroke="#c2c2c2" stroke-width="1" rx="0.5"/><path transform="translate(52.1,309.03999999999996)" d="M0.8,2 C1.5,0 3,0.2 4,0.4 C5.5,0.8 6.5,1.6 7.6,1.6 C9,1.6 10.5,0 12,0.4 C13.8,1 13.8,3 13.7,3.5 C13.6,5 13.8,6.5 13,7 C12,7.6 11,7.2 10,6.5 C9,5.8 8,5.6 7.2,5.8 C5.5,6.2 4,9 2.4,8.9 C0.5,8.8 0,6.5 0.2,5 C0.3,3.5 0.5,2.5 0.8,2 Z" fill="url(#pg)" stroke="#9a9a9a" stroke-width="0.8"/><text x="71" y="318.53999999999996" font-size="11" font-weight="normal" font-style="italic" fill="#6a6a6a" textLength="84.4" lengthAdjust="spacingAndGlyphs" stroke="#6a6a6a" stroke-width="0.4">landuse_a_3123</text><rect x="35.5" y="323.62" width="11" height="11" fill="#fff" stroke="#c2c2c2" stroke-width="1" rx="0.5"/><circle cx="59.5" cy="329.12" r="1" fill="#e03030"/><text x="71" y="333.62" font-size="11" font-weight="normal" font-style="italic" fill="#6a6a6a" textLength="62.5" lengthAdjust="spacingAndGlyphs" stroke="#6a6a6a" stroke-width="0.4">VIIRS 375m</text><rect x="35.5" y="338.7" width="11" height="11" fill="#fff" stroke="#c2c2c2" stroke-width="1" rx="0.5"/><circle cx="59.5" cy="344.2" r="1" fill="#e03030"/><text x="71" y="348.7" font-size="11" font-weight="normal" font-style="italic" fill="#6a6a6a" textLength="80" lengthAdjust="spacingAndGlyphs" stroke="#6a6a6a" stroke-width="0.4">MODIS C6 1km</text><rect x="35.5" y="353.78" width="11" height="11" fill="#fff" stroke="#c2c2c2" stroke-width="1" rx="0.5"/><rect x="53.5" y="353.28" width="12" height="12" fill="#f4faf2" stroke="#e0e8dc" stroke-width="1"/><text x="71" y="363.78" font-size="11" font-weight="normal" font-style="italic" fill="#6a6a6a" textLength="137" lengthAdjust="spacingAndGlyphs" stroke="#6a6a6a" stroke-width="0.4">buildings_a_3123_cleaned</text><polygon points="5,371.36 8.5,374.36 5,377.36" fill="#222"/><rect x="18.5" y="368.86" width="11" height="11" fill="#fff" stroke="#c2c2c2" stroke-width="1" rx="0.5"/><g><rect x="37" y="368.36" width="11" height="11" fill="#b8d4f0"/><rect x="37" y="368.36" width="2.5" height="2.5" fill="#0a1a3a"/><rect x="45" y="368.36" width="2.5" height="2.5" fill="#0a1a3a"/><rect x="41" y="372.36" width="2.5" height="2.5" fill="#0a1a3a"/><rect x="37" y="376.86" width="2.5" height="2.5" fill="#0a1a3a"/><rect x="41" y="368.36" width="2.5" height="2.5" fill="#1a2a4a"/><rect x="44.5" y="376.86" width="3" height="2.5" fill="#e8f0f8"/></g><text x="54.2" y="378.86" font-size="11" font-weight="normal" font-style="italic" fill="#6a6a6a" textLength="85" lengthAdjust="spacingAndGlyphs" stroke="#6a6a6a" stroke-width="0.4">OpenStreetMap</text><rect x="19.5" y="383.44" width="11.5" height="12.5" rx="1.5" fill="#f2f2f2" stroke="#999" stroke-width="0.8"/><line x1="19.5" y1="385.94" x2="31" y2="385.94" stroke="#999" stroke-width="0.6"/><line x1="21.5" y1="388.44" x2="24.5" y2="388.44" stroke="#aaa" stroke-width="0.8"/><line x1="26" y1="388.44" x2="29" y2="388.44" stroke="#aaa" stroke-width="0.8"/><line x1="21.5" y1="390.94" x2="24.5" y2="390.94" stroke="#aaa" stroke-width="0.8"/><line x1="26" y1="390.94" x2="29" y2="390.94" stroke="#aaa" stroke-width="0.8"/><line x1="21.5" y1="393.44" x2="24.5" y2="393.44" stroke="#aaa" stroke-width="0.8"/><line x1="26" y1="393.44" x2="29" y2="393.44" stroke="#aaa" stroke-width="0.8"/><text x="37" y="393.94" font-size="11" font-weight="normal" font-style="normal" fill="#111" textLength="120.5" lengthAdjust="spacingAndGlyphs" stroke="#111" stroke-width="0.45">green_spaces_gridded</text><rect x="19.5" y="398.52" width="11.5" height="12.5" rx="1.5" fill="#f2f2f2" stroke="#999" stroke-width="0.8"/><line x1="19.5" y1="401.02" x2="31" y2="401.02" stroke="#999" stroke-width="0.6"/><line x1="21.5" y1="403.52" x2="24.5" y2="403.52" stroke="#aaa" stroke-width="0.8"/><line x1="26" y1="403.52" x2="29" y2="403.52" stroke="#aaa" stroke-width="0.8"/><line x1="21.5" y1="406.02" x2="24.5" y2="406.02" stroke="#aaa" stroke-width="0.8"/><line x1="26" y1="406.02" x2="29" y2="406.02" stroke="#aaa" stroke-width="0.8"/><line x1="21.5" y1="408.52" x2="24.5" y2="408.52" stroke="#aaa" stroke-width="0.8"/><line x1="26" y1="408.52" x2="29" y2="408.52" stroke="#aaa" stroke-width="0.8"/><text x="37" y="409.02" font-size="11" font-weight="normal" font-style="normal" fill="#111" textLength="126" lengthAdjust="spacingAndGlyphs" stroke="#111" stroke-width="0.45">builtup_spaces_gridded</text><rect x="18.5" y="414.1" width="11" height="11" fill="#fff" stroke="#c2c2c2" stroke-width="1" rx="0.5"/><rect x="36.5" y="413.6" width="12" height="12" fill="#5f8f5f" stroke="#4a7a4a" stroke-width="1"/><text x="54.2" y="424.1" font-size="11" font-weight="normal" font-style="italic" fill="#6a6a6a" textLength="121" lengthAdjust="spacingAndGlyphs" stroke="#6a6a6a" stroke-width="0.4">green_spaces_gridded</text><rect x="18.5" y="429.18" width="11" height="11" fill="#fff" stroke="#c2c2c2" stroke-width="1" rx="0.5"/><rect x="36.5" y="428.68" width="12" height="12" fill="#f0a0aa" stroke="#e890a0" stroke-width="1"/><text x="54.2" y="439.18" font-size="11" font-weight="normal" font-style="italic" fill="#6a6a6a" textLength="127.3" lengthAdjust="spacingAndGlyphs" stroke="#6a6a6a" stroke-width="0.4">builtup_spaces_gridded</text><polygon points="5,446.76 8.5,449.76 5,452.76" fill="#222"/><rect x="18.5" y="444.26" width="11" height="11" fill="#fff" stroke="#c2c2c2" stroke-width="1" rx="0.5"/><path transform="translate(35.1,444.76)" d="M0.8,2 C1.5,0 3,0.2 4,0.4 C5.5,0.8 6.5,1.6 7.6,1.6 C9,1.6 10.5,0 12,0.4 C13.8,1 13.8,3 13.7,3.5 C13.6,5 13.8,6.5 13,7 C12,7.6 11,7.2 10,6.5 C9,5.8 8,5.6 7.2,5.8 C5.5,6.2 4,9 2.4,8.9 C0.5,8.8 0,6.5 0.2,5 C0.3,3.5 0.5,2.5 0.8,2 Z" fill="url(#pg)" stroke="#9a9a9a" stroke-width="0.8"/><text x="54.2" y="454.26" font-size="11" font-weight="normal" font-style="italic" fill="#6a6a6a" textLength="50.4" lengthAdjust="spacingAndGlyphs" stroke="#6a6a6a" stroke-width="0.4">grid10km</text><polygon points="5,461.84 8.5,464.84 5,467.84" fill="#222"/><rect x="18.5" y="459.34" width="11" height="11" fill="#fff" stroke="#c2c2c2" stroke-width="1" rx="0.5"/><path transform="translate(35.1,459.84)" d="M0.8,2 C1.5,0 3,0.2 4,0.4 C5.5,0.8 6.5,1.6 7.6,1.6 C9,1.6 10.5,0 12,0.4 C13.8,1 13.8,3 13.7,3.5 C13.6,5 13.8,6.5 13,7 C12,7.6 11,7.2 10,6.5 C9,5.8 8,5.6 7.2,5.8 C5.5,6.2 4,9 2.4,8.9 C0.5,8.8 0,6.5 0.2,5 C0.3,3.5 0.5,2.5 0.8,2 Z" fill="url(#pg)" stroke="#9a9a9a" stroke-width="0.8"/><text x="54.2" y="469.34" font-size="11" font-weight="normal" font-style="italic" fill="#6a6a6a" textLength="111.6" lengthAdjust="spacingAndGlyphs" stroke="#6a6a6a" stroke-width="0.4">line_lengths_gridded</text><rect x="18.5" y="474.42" width="11" height="11" fill="#fff" stroke="#c2c2c2" stroke-width="1" rx="0.5"/><rect x="36.5" y="473.92" width="12" height="12" fill="#fff" stroke="#c4c4c4" stroke-width="1"/><line x1="36" y1="485.92" x2="49" y2="485.92" stroke="#333" stroke-width="1.2"/><text x="54.2" y="484.42" font-size="11" font-weight="normal" font-style="italic" fill="#6a6a6a" textLength="79.2" lengthAdjust="spacingAndGlyphs" stroke="#6a6a6a" stroke-width="0.4">grid10km copy</text><polygon points="5,492.0 8.5,495.0 5,498.0" fill="#222"/><rect x="18.5" y="489.5" width="11" height="11" fill="#fff" stroke="#c2c2c2" stroke-width="1" rx="0.5"/><path transform="translate(35.1,490.0)" d="M0.8,2 C1.5,0 3,0.2 4,0.4 C5.5,0.8 6.5,1.6 7.6,1.6 C9,1.6 10.5,0 12,0.4 C13.8,1 13.8,3 13.7,3.5 C13.6,5 13.8,6.5 13,7 C12,7.6 11,7.2 10,6.5 C9,5.8 8,5.6 7.2,5.8 C5.5,6.2 4,9 2.4,8.9 C0.5,8.8 0,6.5 0.2,5 C0.3,3.5 0.5,2.5 0.8,2 Z" fill="url(#pg)" stroke="#9a9a9a" stroke-width="0.8"/><text x="54.2" y="499.5" font-size="11" font-weight="normal" font-style="italic" fill="#6a6a6a" textLength="116.4" lengthAdjust="spacingAndGlyphs" stroke="#6a6a6a" stroke-width="0.4">landuse_3123_clipped</text>
<rect x="2.5" y="721.5" width="175.5" height="19" rx="2" fill="#fff" stroke="#c8c8c8" stroke-width="1"/><circle cx="13" cy="729.5" r="3.6" fill="none" stroke="#888" stroke-width="1.1"/><line x1="15.6" y1="732.1" x2="18.6" y2="735.1" stroke="#888" stroke-width="1.2"/><text x="26" y="735.8" font-size="11" font-weight="normal" font-style="normal" fill="#8c8c8c" textLength="98.5" lengthAdjust="spacingAndGlyphs">Type to locate (⌘K)</text><text x="186.2" y="735.8" font-size="10" font-weight="normal" font-style="normal" fill="#1a1a1a" textLength="119" lengthAdjust="spacingAndGlyphs">Updated local data sources</text><text x="867.3" y="735.8" font-size="10" font-weight="normal" font-style="normal" fill="#222" textLength="47.4" lengthAdjust="spacingAndGlyphs">Coordinate</text><rect x="918.6" y="722.5" width="87" height="17" rx="2" fill="#fff" stroke="#c8c8c8" stroke-width="1"/><text x="925.6" y="735.8" font-size="10" font-weight="normal" font-style="normal" fill="#111" textLength="71.4" lengthAdjust="spacingAndGlyphs">431479,1689951</text><g fill="none" stroke="#333" stroke-width="1"><ellipse cx="1014.5" cy="730.5" rx="4" ry="5.5" transform="rotate(-25 1014.5 730.5)"/><path d="M1011,727 L1018,732"/><path d="M1018,725 Q1021,723 1022,726"/></g><text x="1034" y="735.8" font-size="10" font-weight="normal" font-style="normal" fill="#222" textLength="23" lengthAdjust="spacingAndGlyphs">Scale</text><rect x="1061" y="722" width="77.5" height="18" rx="2" fill="#fff" stroke="#c8c8c8" stroke-width="1"/><line x1="1122.6" y1="722.5" x2="1122.6" y2="739.5" stroke="#d4d4d4"/><text x="1063.6" y="735.8" font-size="10" font-weight="normal" font-style="normal" fill="#111" textLength="37.4" lengthAdjust="spacingAndGlyphs">1:125185</text><polygon points="1127.5,729.5 1133.5,729.5 1130.5,732.5" fill="#444"/><path d="M1151,730 L1151,727.5 A3.3,3.3 0 0 1 1157.6,727.5 L1157.6,730" fill="none" stroke="#666" stroke-width="1.3"/><rect x="1149" y="729.5" width="10.6" height="7.5" rx="1.2" fill="#6a6a6a"/><text x="1167.2" y="735.8" font-size="10" font-weight="normal" font-style="normal" fill="#222" textLength="40.3" lengthAdjust="spacingAndGlyphs">Magnifier</text><rect x="1211" y="722.5" width="73.5" height="17.5" rx="2" fill="#fff" stroke="#c8c8c8" stroke-width="1"/><line x1="1272.5" y1="723" x2="1272.5" y2="739.5" stroke="#d4d4d4"/><polyline points="1276.0,729.25 1278.5,726.75 1281.0,729.25" fill="none" stroke="#444" stroke-width="1.1"/><polyline points="1276.0,733.25 1278.5,735.75 1281.0,733.25" fill="none" stroke="#444" stroke-width="1.1"/><text x="1215" y="735.8" font-size="10" font-weight="normal" font-style="normal" fill="#111" textLength="23" lengthAdjust="spacingAndGlyphs">100%</text><text x="1292.6" y="735.8" font-size="10" font-weight="normal" font-style="normal" fill="#222" textLength="36.2" lengthAdjust="spacingAndGlyphs">Rotation</text><rect x="1337.5" y="722.5" width="74.5" height="17.5" rx="2" fill="#fff" stroke="#c8c8c8" stroke-width="1"/><line x1="1400.6" y1="723" x2="1400.6" y2="739.5" stroke="#d4d4d4"/><polyline points="1404.1,729.25 1406.6,726.75 1409.1,729.25" fill="none" stroke="#444" stroke-width="1.1"/><polyline points="1404.1,733.25 1406.6,735.75 1409.1,733.25" fill="none" stroke="#444" stroke-width="1.1"/><text x="1341.6" y="735.8" font-size="10" font-weight="normal" font-style="normal" fill="#111" textLength="19.4" lengthAdjust="spacingAndGlyphs">0,0 °</text><rect x="1418.5" y="725.5" width="11" height="11" rx="0.5" fill="#fff" stroke="#b8b8b8" stroke-width="1"/><path d="M1421,731 L1423.3,734.3 L1427.6,727.6" fill="none" stroke="#000" stroke-width="1.4"/><text x="1434.5" y="735.8" font-size="10" font-weight="normal" font-style="normal" fill="#333" textLength="30.5" lengthAdjust="spacingAndGlyphs">Render</text><g fill="none" stroke="#777" stroke-width="0.9"><circle cx="1485" cy="731" r="5.5"/><ellipse cx="1485" cy="731" rx="2.5" ry="5.5"/><line x1="1479.5" y1="731" x2="1490.5" y2="731"/><line x1="1480.5" y1="728" x2="1489.5" y2="728"/><line x1="1480.5" y1="734" x2="1489.5" y2="734"/></g><text x="1493.5" y="735.8" font-size="10" font-weight="normal" font-style="normal" fill="#444" textLength="48.5" lengthAdjust="spacingAndGlyphs">EPSG:3123</text><ellipse cx="1568.5" cy="730.5" rx="6.5" ry="5.3" fill="#555"/><polygon points="1568,734 1574,738 1572,733" fill="#555"/><circle cx="1565.5" cy="730.5" r="0.9" fill="#eee"/><circle cx="1568.5" cy="730.5" r="0.9" fill="#eee"/><circle cx="1571.5" cy="730.5" r="0.9" fill="#eee"/><rect x="1596" y="731" width="1" height="1" fill="#c0c0c0"/><rect x="1593" y="734" width="1" height="1" fill="#c0c0c0"/><rect x="1596" y="734" width="1" height="1" fill="#c0c0c0"/><rect x="1590" y="737" width="1" height="1" fill="#c0c0c0"/><rect x="1593" y="737" width="1" height="1" fill="#c0c0c0"/><rect x="1596" y="737" width="1" height="1" fill="#c0c0c0"/><rect x="1587" y="740" width="1" height="1" fill="#c0c0c0"/><rect x="1590" y="740" width="1" height="1" fill="#c0c0c0"/><rect x="1593" y="740" width="1" height="1" fill="#c0c0c0"/><rect x="1596" y="740" width="1" height="1" fill="#c0c0c0"/>
</svg>
<div class="abs" style="left:0;top:742px;width:1600px;height:1px;background:#f4f4f4"></div>
<div class="abs" style="left:0;top:743px;width:1600px;height:3px;background:#000"></div>
</body></html>
